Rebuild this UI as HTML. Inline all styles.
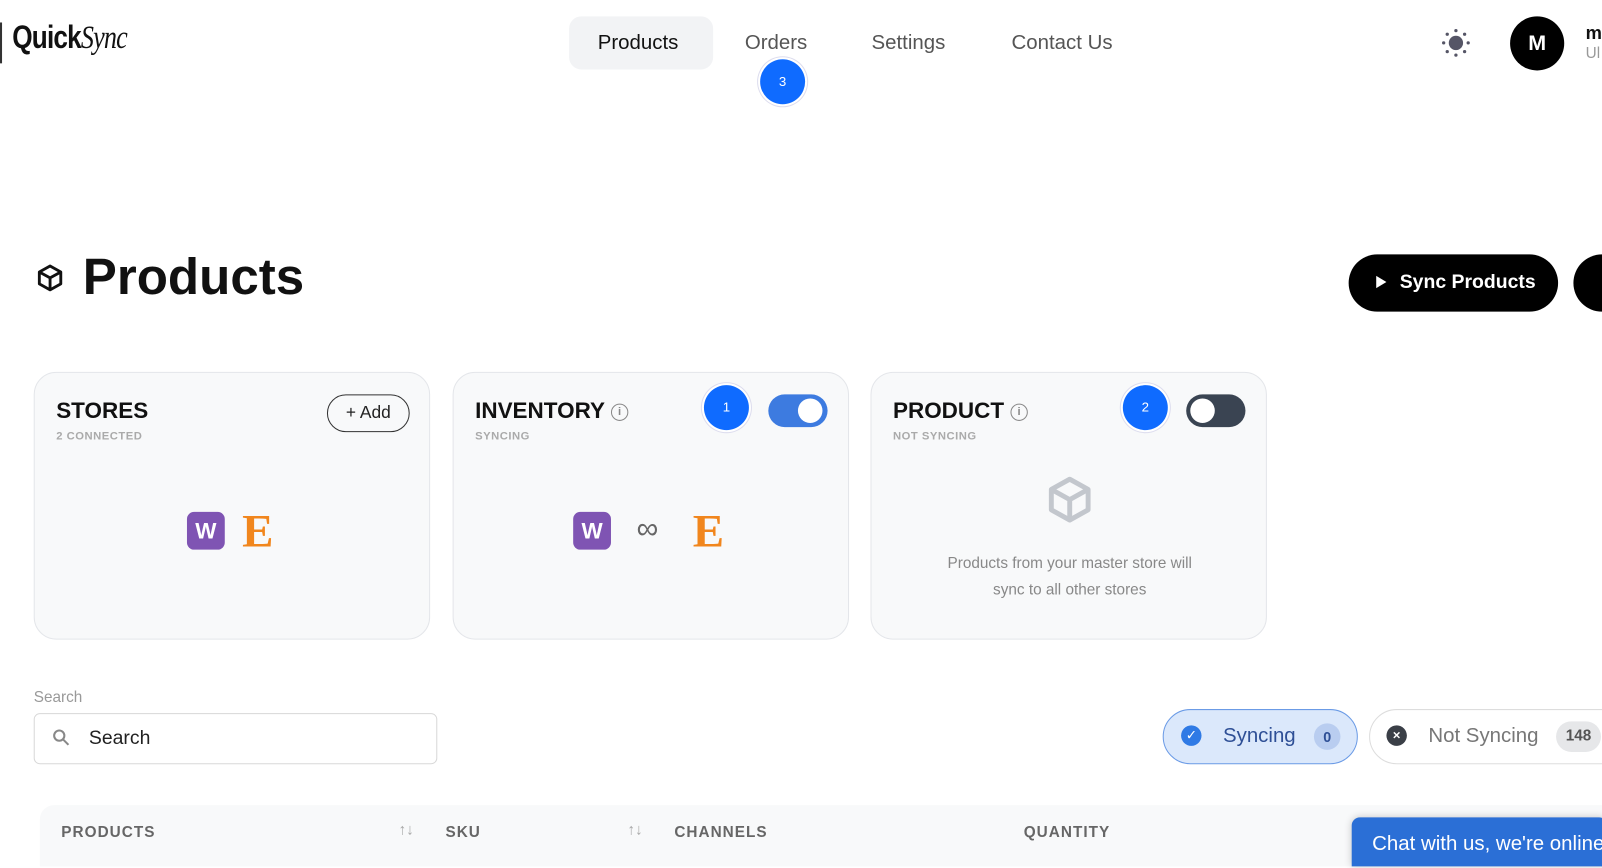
<!DOCTYPE html>
<html><head><style>
*{box-sizing:border-box;margin:0;padding:0}
body{width:1602px;height:868px;overflow:hidden;background:#fff;font-family:"Liberation Sans",sans-serif;position:relative;color:#111}
#w{position:absolute;left:0;top:0;width:1568px;height:850px;transform:scale(1.0217);transform-origin:0 0;overflow:hidden}
.a{position:absolute}
.nav{font-size:20px;color:#555;top:31px}
.card{position:absolute;top:364px;width:388px;height:262px;border:1px solid #e4e6ea;border-radius:22px;background:#f8f9fa}
.card h3{position:absolute;left:21px;top:24px;font-size:22px;font-weight:bold;color:#111}
.card .sub{position:absolute;left:21px;top:56px;font-size:11px;font-weight:bold;color:#aaa;letter-spacing:.5px}
.badge{position:absolute;width:44px;height:44px;border-radius:50%;background:#0f6bff;color:#fff;font-size:13px;text-align:center;line-height:44px;box-shadow:0 0 0 2px #fff,0 0 0 3px #dde}
.w{position:absolute;width:37px;height:37px;border-radius:7px;background:#7f54b3;color:#fff;font-size:22px;font-weight:bold;text-align:center;line-height:37px}
.e{position:absolute;font-family:"Liberation Serif",serif;font-weight:bold;font-size:46px;color:#f1861d;line-height:46px}
.info{display:inline-block;width:17px;height:17px;border:1.5px solid #888;border-radius:50%;font-size:11px;color:#888;text-align:center;line-height:14px;font-weight:bold;vertical-align:middle}
.th{position:absolute;top:806px;font-size:15px;font-weight:bold;color:#666;letter-spacing:1px}
</style></head><body><div id="w">
<div class="a" style="left:0;top:22px;width:2px;height:40px;background:#333"></div>
<div class="a" style="left:12px;top:18px;font-size:32px;font-weight:bold;letter-spacing:-1px;transform:scaleX(.8);transform-origin:left">Quick<i style="font-family:'Liberation Serif',serif;font-weight:normal">Sync</i></div>

<div class="a" style="left:557px;top:16px;width:141px;height:52px;border-radius:12px;background:#f2f3f5"></div>
<div class="a nav" style="left:585px;color:#111">Products</div>
<div class="a nav" style="left:729px">Orders</div>
<div class="a nav" style="left:853px">Settings</div>
<div class="a nav" style="left:990px">Contact Us</div>
<div class="badge" style="left:744px;top:58px">3</div>

<svg class="a" style="left:1410px;top:27px" width="30" height="30" viewBox="0 0 30 30"><circle cx="15" cy="15" r="7" fill="#556"/><g fill="#556"><circle cx="15" cy="3" r="1.6"/><circle cx="15" cy="27" r="1.6"/><circle cx="3" cy="15" r="1.6"/><circle cx="27" cy="15" r="1.6"/><circle cx="6.5" cy="6.5" r="1.6"/><circle cx="23.5" cy="6.5" r="1.6"/><circle cx="6.5" cy="23.5" r="1.6"/><circle cx="23.5" cy="23.5" r="1.6"/></g></svg>
<div class="a" style="left:1478px;top:16px;width:53px;height:53px;border-radius:50%;background:#000;color:#fff;font-size:21px;font-weight:bold;text-align:center;line-height:53px">M</div>
<div class="a" style="left:1552px;top:22px;font-size:18px;font-weight:bold">m</div>
<div class="a" style="left:1552px;top:44px;font-size:15px;color:#999">Ul</div>

<svg class="a" style="left:35px;top:258px" width="28" height="28" viewBox="0 0 24 24" fill="none" stroke="#111" stroke-width="2.4" stroke-linejoin="round"><path d="M12 2 21 7v10l-9 5-9-5V7z M3 7l9 5 9-5 M12 12v10 M12 12 21 7"/></svg>
<div class="a" style="left:81px;top:242px;font-size:50px;font-weight:bold">Products</div>

<div class="a" style="left:1320px;top:249px;width:205px;height:56px;border-radius:28px;background:#000;color:#fff;font-size:19px;font-weight:bold;line-height:56px;padding-left:50px">Sync Products</div>
<div class="a" style="left:1347px;top:270px;width:0;height:0;border-left:10px solid #fff;border-top:6px solid transparent;border-bottom:6px solid transparent"></div>
<div class="a" style="left:1540px;top:249px;width:80px;height:56px;border-radius:28px;background:#000"></div>

<div class="card" style="left:33px">
<h3>STORES</h3><div class="sub">2 CONNECTED</div>
<div class="a" style="left:286px;top:21px;width:81px;height:37px;border:1.5px solid #333;border-radius:19px;font-size:17px;line-height:34px;text-align:center;color:#222">+ Add</div>
<div class="w" style="left:149px;top:136px">W</div>
<div class="e" style="left:203px;top:132px">E</div>
</div>
<div class="card" style="left:443px">
<h3>INVENTORY <span class="info">i</span></h3><div class="sub">SYNCING</div>
<div class="badge" style="left:245px;top:12px">1</div>
<div class="a" style="left:308px;top:21px;width:58px;height:32px;border-radius:16px;background:#3d7be0"><div class="a" style="left:29px;top:4px;width:24px;height:24px;border-radius:50%;background:#fff"></div></div>
<div class="w" style="left:117px;top:136px">W</div>
<div class="a" style="left:179px;top:136px;font-size:30px;color:#666">∞</div>
<div class="e" style="left:234px;top:132px">E</div>
</div>
<div class="card" style="left:852px">
<h3>PRODUCT <span class="info">i</span></h3><div class="sub">NOT SYNCING</div>
<div class="badge" style="left:246px;top:12px">2</div>
<div class="a" style="left:308px;top:21px;width:58px;height:32px;border-radius:16px;background:#3a4452"><div class="a" style="left:4px;top:4px;width:24px;height:24px;border-radius:50%;background:#fff"></div></div>
<svg class="a" style="left:170px;top:100px" width="48" height="48" viewBox="0 0 24 24" fill="none" stroke="#c3c7cd" stroke-width="2.4" stroke-linejoin="round"><path d="M12 2 21 7v10l-9 5-9-5V7z M3 7l9 5 9-5 M12 12v10"/></svg>
<div class="a" style="left:0;width:388px;top:174px;text-align:center;font-size:15px;color:#888;line-height:26px">Products from your master store will<br>sync to all other stores</div>
</div>

<div class="a" style="left:33px;top:674px;font-size:15px;color:#999">Search</div>
<div class="a" style="left:33px;top:698px;width:395px;height:50px;border:1px solid #d8d8d8;border-radius:6px"></div>
<svg class="a" style="left:51px;top:713px" width="18" height="18" viewBox="0 0 18 18" fill="none" stroke="#888" stroke-width="2"><circle cx="7" cy="7" r="5"/><path d="M11 11l5 5"/></svg>
<div class="a" style="left:87px;top:712px;font-size:19px;color:#222">Search</div>

<div class="a" style="left:1138px;top:694px;width:191px;height:54px;border:1.5px solid #6b9be6;border-radius:27px;background:#dbe8fb"></div>
<div class="a" style="left:1156px;top:710px;width:20px;height:20px;border-radius:50%;background:#2f7ae5;color:#fff;font-size:13px;text-align:center;line-height:20px">✓</div>
<div class="a" style="left:1197px;top:709px;font-size:20px;color:#2e4f96">Syncing</div>
<div class="a" style="left:1286px;top:708px;width:26px;height:26px;border-radius:50%;background:#b9cdf0;font-size:14px;font-weight:bold;color:#2e4f96;text-align:center;line-height:26px">0</div>
<div class="a" style="left:1340px;top:694px;width:280px;height:54px;border:1.5px solid #ddd;border-radius:27px;background:#fff"></div>
<div class="a" style="left:1357px;top:710px;width:20px;height:20px;border-radius:50%;background:#3a3f47;color:#fff;font-size:13px;font-weight:bold;text-align:center;line-height:20px">×</div>
<div class="a" style="left:1398px;top:709px;font-size:20px;color:#777">Not Syncing</div>
<div class="a" style="left:1523px;top:706px;width:44px;height:30px;border-radius:15px;background:#e6e7e9;font-size:15px;font-weight:bold;color:#555;text-align:center;line-height:30px">148</div>

<div class="a" style="left:39px;top:788px;width:1563px;height:60px;background:#f8f9fa;border-radius:14px 0 0 0"></div>
<div class="th" style="left:60px">PRODUCTS</div>
<div class="a" style="left:390px;top:804px;font-size:15px;color:#aaa">↑↓</div>
<div class="th" style="left:436px">SKU</div>
<div class="a" style="left:614px;top:804px;font-size:15px;color:#aaa">↑↓</div>
<div class="th" style="left:660px">CHANNELS</div>
<div class="th" style="left:1002px">QUANTITY</div>
<div class="a" style="left:1323px;top:800px;width:250px;height:48px;border-radius:8px 8px 0 0;background:#2b6fd6;color:#fff;font-size:20px;line-height:52px;padding-left:20px;white-space:nowrap;overflow:hidden;box-shadow:0 0 8px rgba(0,0,0,.2)">Chat with us, we're online</div>
</div></body></html>
